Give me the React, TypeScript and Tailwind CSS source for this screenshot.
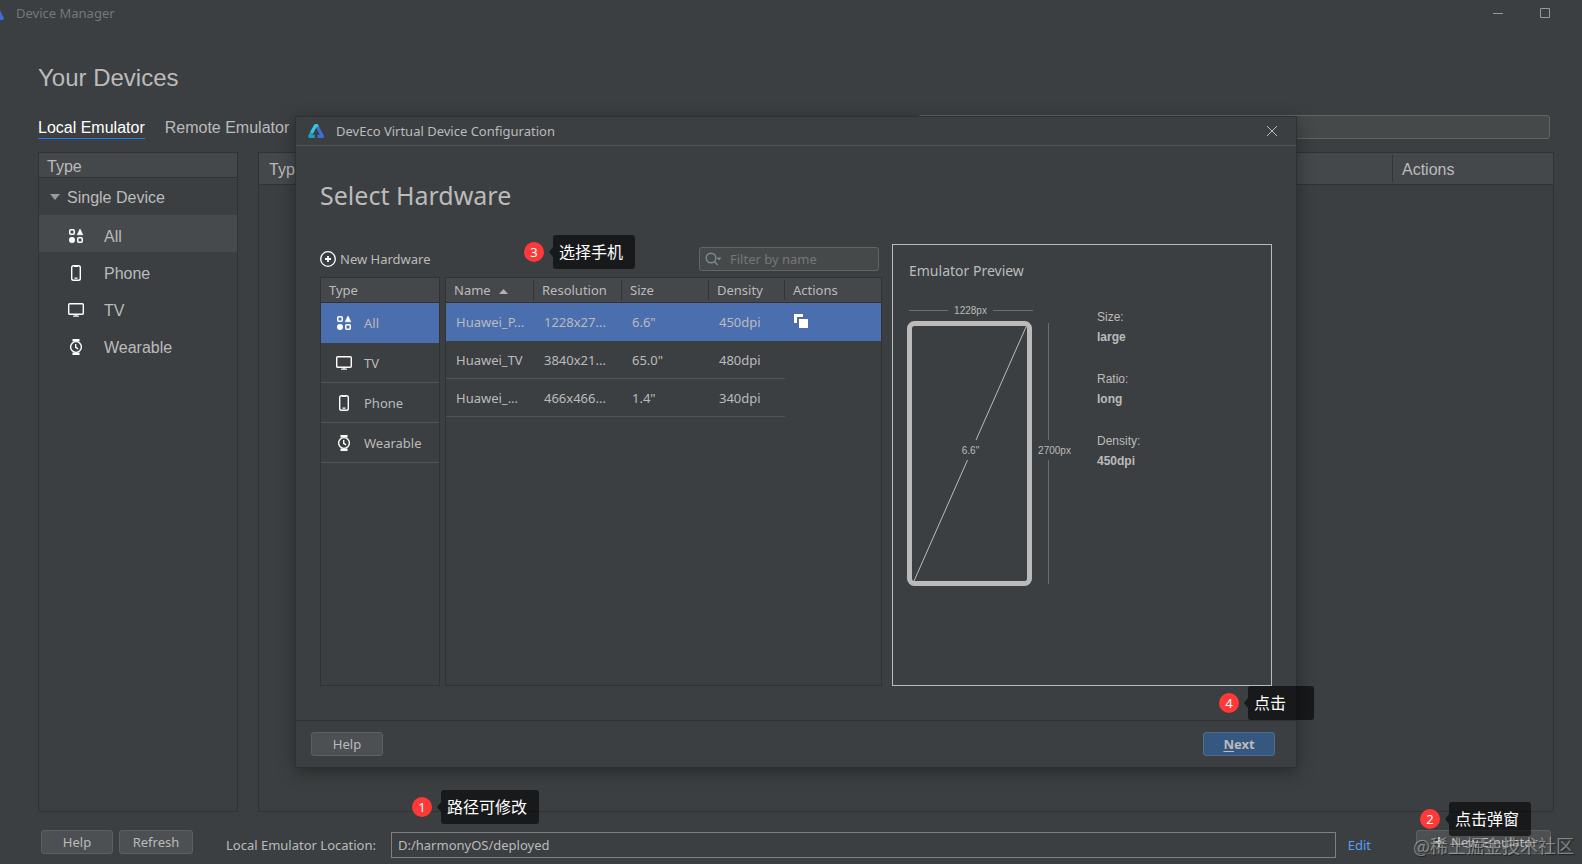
import type { ReactNode } from 'react'

type IconName = 'all' | 'phone' | 'tv' | 'watch'

const SIDEBAR_TYPES: { label: string; icon: IconName }[] = [
  { label: 'All', icon: 'all' },
  { label: 'Phone', icon: 'phone' },
  { label: 'TV', icon: 'tv' },
  { label: 'Wearable', icon: 'watch' },
]

const HARDWARE_TYPES: { label: string; icon: IconName }[] = [
  { label: 'All', icon: 'all' },
  { label: 'TV', icon: 'tv' },
  { label: 'Phone', icon: 'phone' },
  { label: 'Wearable', icon: 'watch' },
]

const HARDWARE = [
  { name: 'Huawei_P...', resolution: '1228x27...', size: '6.6"', density: '450dpi' },
  { name: 'Huawei_TV', resolution: '3840x21...', size: '65.0"', density: '480dpi' },
  { name: 'Huawei_...', resolution: '466x466...', size: '1.4"', density: '340dpi' },
]

const SPECS = [
  { label: 'Size:', value: 'large' },
  { label: 'Ratio:', value: 'long' },
  { label: 'Density:', value: '450dpi' },
]

function TypeIcon({ name }: { name: IconName }) {
  return (
    <svg width="16" height="16" viewBox="0 0 16 16" fill="none" stroke="#fff" className="shrink-0">
      {name === 'all' && (
        <>
          <rect x="1.75" y="1.75" width="4.5" height="4.5" rx="1" strokeWidth="1.5" />
          <path d="M12 1 14.8 6.8H9.2Z" fill="#fff" strokeWidth="0.6" strokeLinejoin="round" />
          <circle cx="4" cy="12" r="3" fill="#fff" stroke="none" />
          <rect x="9.75" y="9.75" width="4.5" height="4.5" rx="1" strokeWidth="1.5" />
        </>
      )}
      {name === 'phone' && (
        <>
          <rect x="3.7" y="0.7" width="8.6" height="14.6" rx="1.8" strokeWidth="1.4" />
          <path d="M6 1.5h4M6.5 13.2h3" strokeWidth="1.2" />
        </>
      )}
      {name === 'tv' && (
        <>
          <rect x="0.7" y="1.7" width="14.6" height="10.6" rx="1" strokeWidth="1.4" />
          <path d="M5 14.2h6M6.5 13.2h3" strokeWidth="1" />
        </>
      )}
      {name === 'watch' && (
        <>
          <path d="M4.5 0h7v2.5h-7zM4.5 13.5h7V16h-7z" fill="#fff" stroke="none" />
          <circle cx="8" cy="8" r="5.4" strokeWidth="1.4" />
          <path d="M7.7 5v3.3l2.4 1.6" strokeWidth="1.4" />
        </>
      )}
    </svg>
  )
}

function Logo({ className = '' }: { className?: string }) {
  return (
    <svg width="16" height="14" viewBox="0 0 16 14" fill="none" strokeLinejoin="round" className={className}>
      <path d="M8.800 1.700 14.300 12.300H9.500" stroke="#3b6fd4" strokeWidth="3.200" />
      <path d="M6.800 12.300H1.700L5.200 6" stroke="#1f9fba" strokeWidth="3.200" />
      <path d="M3.600 8.800 7.400 1.700H8.800L9.500 3" stroke="#3cc4dc" strokeWidth="3.200" />
    </svg>
  )
}

function Button({ children, primary, className = '' }: { children: ReactNode; primary?: boolean; className?: string }) {
  return (
    <button
      type="button"
      className={`h-6 rounded-[3px] border text-[13px] leading-5 ${
        primary ? 'border-[#4c708c] bg-[#365880] font-bold' : 'border-[#5e6060] bg-[#4c5052]'
      } ${className}`}
    >
      {children}
    </button>
  )
}

function Callout({ step, text, className = '', boxClass = '' }: { step: number; text: string; className?: string; boxClass?: string }) {
  return (
    <div className={`absolute flex items-center ${className}`}>
      <span className="flex size-5 items-center justify-center rounded-full bg-[#ff3838] text-[13px] leading-none text-white">
        {step}
      </span>
      <span className="ml-[5px] h-0 w-0 border-y-[5px] border-r-[4px] border-y-transparent border-r-black/60" />
      <span
        className={`h-[34px] rounded-[3px] bg-black/60 pl-1.5 font-['Noto_Sans_CJK_SC',sans-serif] text-base leading-8 whitespace-nowrap text-white ${boxClass}`}
      >
        {text}
      </span>
    </div>
  )
}

function EmulatorPreview() {
  return (
    <section className="w-[380px] self-stretch border border-[#bbb] px-4 pt-4">
      <h3 className="text-sm leading-5">Emulator Preview</h3>
      <div className="mt-[23px] flex font-['Liberation_Sans',sans-serif]">
        <svg width="168" height="284" viewBox="907 304 168 284" className="-ml-0.5 shrink-0 text-[10px]" fill="#bbb">
          <path d="M909 310.500h39M993 310.500h40M1048.500 323v117M1048.500 460v124" stroke="#6a6c6d" fill="none" />
          <rect x="909.500" y="323.500" width="120" height="260" rx="5" fill="none" stroke="#bbb" strokeWidth="5" />
          <path d="M1026 327 976 440M967.500 460 914 581" stroke="#bbb" fill="none" />
          <text x="970.500" y="314" textAnchor="middle">1228px</text>
          <text x="970.500" y="454" textAnchor="middle">6.6"</text>
          <text x="1054.500" y="454" textAnchor="middle">2700px</text>
        </svg>
        <dl className="ml-[22px] pt-[3px] text-xs leading-5">
          {SPECS.map(spec => (
            <div key={spec.label} className="mb-[22px]">
              <dt>{spec.label}</dt>
              <dd className="font-bold">{spec.value}</dd>
            </div>
          ))}
        </dl>
      </div>
    </section>
  )
}

function HardwareTable() {
  const head = 'relative h-[25px] pl-2 pt-0.5 text-left font-normal border-b border-[#323232]'
  const divider = <span className="absolute top-0.5 right-0 bottom-0.5 w-px bg-[#323435]" />
  return (
    <table className="w-full table-fixed border-separate border-spacing-0">
      <thead className="bg-[#45484a]">
        <tr>
          <th className={`${head} w-[88px]`}>
            <span className="flex items-center gap-2">
              Name
              <svg width="9" height="5" viewBox="0 0 9 5" fill="#afb1b3"><path d="M4.500 0 9 5H0Z" /></svg>
            </span>
            {divider}
          </th>
          <th className={`${head} w-[88px]`}>Resolution{divider}</th>
          <th className={`${head} w-[87px]`}>Size{divider}</th>
          <th className={`${head} w-[76px]`}>Density{divider}</th>
          <th className={head}>Actions</th>
        </tr>
      </thead>
      <tbody>
        {HARDWARE.map((hw, i) => {
          const cell = `h-[38px] border-b pt-0.5 pl-2.5 whitespace-nowrap ${i === 0 ? 'border-[#4b6eaf]' : 'border-[#515355]'}`
          return (
            <tr key={hw.name} className={i === 0 ? 'bg-[#4b6eaf]' : ''}>
              <td className={cell}>{hw.name}</td>
              <td className={cell}>{hw.resolution}</td>
              <td className={cell}>{hw.size}</td>
              <td className={cell}>{hw.density}</td>
              <td className="pb-0.5 pl-2">
                {i === 0 && (
                  <button type="button" aria-label="Clone device" className="block">
                    <svg width="16" height="16" viewBox="0 0 16 16" fill="#fff">
                      <path d="M1 1h9v3H4v6H1zM6 6h9v9H6z" />
                    </svg>
                  </button>
                )}
              </td>
            </tr>
          )
        })}
      </tbody>
    </table>
  )
}

function ConfigDialog() {
  return (
    <div
      role="dialog"
      aria-label="DevEco Virtual Device Configuration"
      className="relative flex h-[652px] w-[1002px] flex-col border border-[#2e3031] bg-[#3c3f41] shadow-[0_4px_16px_rgba(0,0,0,0.35)]"
    >
      <header className="flex h-[29px] items-center border-b border-[#515355] pr-[18px] pl-3">
        <Logo />
        <span className="ml-3 flex-1 pt-0.5">DevEco Virtual Device Configuration</span>
        <button type="button" aria-label="Close">
          <svg width="12" height="12" viewBox="0 0 12 12" stroke="#bbb" fill="none"><path d="m1 1 10 10M11 1 1 11" /></svg>
        </button>
      </header>

      <div className="flex flex-1 gap-2.5 pt-[33px] pr-6 pb-[34px] pl-6">
        <div className="flex min-w-0 flex-1 flex-col">
          <h2 className="text-[25px] leading-8">Select Hardware</h2>
          <div className="mt-9 flex h-6 items-center justify-between pr-[3px]">
            <button type="button" className="flex items-center gap-1">
              <svg width="16" height="16" viewBox="0 0 16 16" fill="none" stroke="#fff">
                <circle cx="8" cy="8" r="7.300" strokeWidth="1.300" />
                <path d="M8 5v6M5 8h6" strokeWidth="1.800" />
              </svg>
              <span className="pt-0.5">New Hardware</span>
            </button>
            <label className="flex h-6 w-[180px] items-center rounded-[3px] border border-[#646464] bg-[#45494a] pl-[5px]">
              <svg width="17" height="14" viewBox="0 0 17 14" fill="none" stroke="#7f8b91" strokeWidth="1.400" className="shrink-0">
                <circle cx="6" cy="6" r="4.800" />
                <path d="m9.300 9.300 3.400 3.700" />
                <path d="M11.500 5.500h5L14 8.500Z" fill="#7f8b91" stroke="none" />
              </svg>
              <input
                aria-label="Filter by name"
                placeholder="Filter by name"
                className="ml-2 w-full min-w-0 bg-transparent pt-0.5 outline-none placeholder:text-[#777]"
              />
            </label>
          </div>
          <div className="mt-1.5 flex flex-1 gap-[5px]">
            <div className="w-[120px] border border-[#323232]">
              <div className="h-[25px] border-b border-[#323232] bg-[#45484a] pl-2 leading-[25px]">Type</div>
              {HARDWARE_TYPES.map((type, i) => (
                <button
                  key={type.label}
                  type="button"
                  className={`flex h-10 w-full items-center gap-3 border-b pl-[15px] ${
                    i === 0 ? 'border-[#4b6eaf] bg-[#4b6eaf]' : 'border-[#515355]'
                  }`}
                >
                  <TypeIcon name={type.icon} />
                  <span className="pt-0.5">{type.label}</span>
                </button>
              ))}
            </div>
            <div className="min-w-0 flex-1 border border-[#323232]">
              <HardwareTable />
            </div>
          </div>
        </div>
        <div className="flex pt-[65px]">
          <EmulatorPreview />
        </div>
      </div>

      <footer className="flex h-[47px] items-start justify-between border-t border-[#323232] pt-[11px] pr-[21px] pl-[15px]">
        <Button className="w-[72px]">Help</Button>
        <Button primary className="w-[72px]"><u className="underline-offset-2">N</u>ext</Button>
      </footer>

      <Callout step={3} text="选择手机" className="top-[118px] left-[228px]" boxClass="w-[82px]" />
      <Callout step={4} text="点击" className="-right-[18px] bottom-[47px]" boxClass="w-[66px]" />
    </div>
  )
}

export default function App() {
  return (
    <div className="relative flex min-h-screen flex-col overflow-hidden bg-[#3c3f41] font-['Noto_Sans','Noto_Sans_CJK_SC',sans-serif] text-[13px] text-[#bbb]">
      <header className="flex h-[25px] items-center pr-[31px] text-[#777]">
        <Logo className="-ml-3 shrink-0" />
        <span className="ml-3 flex-1 pt-0.5">Device Manager</span>
        <button type="button" aria-label="Minimize" className="mr-[35px]">
          <svg width="12" height="12" viewBox="0 0 12 12" stroke="#999"><path d="M1 6.500h10" /></svg>
        </button>
        <button type="button" aria-label="Maximize">
          <svg width="12" height="12" viewBox="0 0 12 12" fill="none" stroke="#999"><path d="M1.500 1.500h9v9h-9z" /></svg>
        </button>
      </header>

      <main className="flex flex-1 flex-col pr-7 pl-[38px] font-['Liberation_Sans',sans-serif] text-base">
        <h1 className="mt-[37px] text-2xl leading-8">Your Devices</h1>
        <div className="mt-[21px] flex h-6 items-end justify-between pr-1">
          <div className="flex gap-5 leading-5">
            <button type="button" className="border-b border-[#1a7cf0] pt-0.5 text-white">Local Emulator</button>
            <button type="button" className="border-b border-transparent pt-0.5">Remote Emulator</button>
          </div>
          <input aria-label="Search devices" className="h-6 w-[632px] rounded-[3px] border border-[#646464] bg-[#45494a] px-2" />
        </div>

        <div className="mt-[13px] flex flex-1 gap-5">
          <aside className="w-[200px] border border-[#323232]">
            <div className="h-[25px] border-b border-[#323232] bg-[#45484a] pl-2 leading-7">Type</div>
            <div className="flex h-[37px] items-center gap-[7px] pl-[11px]">
              <svg width="10" height="6" viewBox="0 0 10 6" fill="#999"><path d="M0 0h10L5 6Z" /></svg>
              <span className="pt-0.5">Single Device</span>
            </div>
            {SIDEBAR_TYPES.map((type, i) => (
              <button
                key={type.label}
                type="button"
                className={`flex h-[37px] w-full items-center gap-5 pt-1 pl-[29px] ${i === 0 ? 'bg-[#464a4d]' : ''}`}
              >
                <TypeIcon name={type.icon} />
                <span className="pt-[3px]">{type.label}</span>
              </button>
            ))}
          </aside>
          <div className="min-w-0 flex-1 border border-[#323232]">
            <table className="w-full table-fixed border-separate border-spacing-0">
              <thead className="bg-[#45484a]">
                <tr>
                  <th className="h-8 border-b border-[#323232] pt-0.5 pl-2.5 text-left font-normal">Type</th>
                  <th className="relative w-[161px] border-b border-[#323232] pt-0.5 pl-2.5 text-left font-normal">
                    <span className="absolute top-0.5 bottom-0.5 left-0 w-px bg-[#323435]" />
                    Actions
                  </th>
                </tr>
              </thead>
            </table>
          </div>
        </div>
      </main>

      <footer className="relative flex h-[52px] items-start pt-[18px] pr-[31px] pl-[41px]">
        <Button className="w-[72px]">Help</Button>
        <Button className="ml-1.5 w-[74px]">Refresh</Button>
        <div className="flex flex-1 items-center pt-0.5 pl-[33px]">
          <label htmlFor="location" className="pt-0.5">Local Emulator Location:</label>
          <input
            id="location"
            defaultValue="D:/harmonyOS/deployed"
            className="ml-[15px] h-[26px] min-w-0 flex-1 border border-[#808080] bg-transparent px-1.5 outline-none"
          />
          <a href="#edit" className="mr-[45px] ml-3 pt-0.5 text-[#589df6]">Edit</a>
        </div>
        <Button className="flex w-[135px] items-center gap-1.5 pl-4">
          <svg width="12" height="12" viewBox="0 0 12 12" stroke="#bbb" strokeWidth="2"><path d="M6 1v10M1 6h10" /></svg>
          New Emulator
        </Button>
        <Callout step={1} text="路径可修改" className="-top-[22px] left-[412px]" boxClass="w-[98px]" />
        <Callout step={2} text="点击弹窗" className="-top-[10px] right-[51px]" boxClass="w-[82px]" />
        <span className="absolute right-2 bottom-[7px] font-['Noto_Sans_CJK_SC',sans-serif] text-lg leading-6 text-white/40 [text-shadow:1px_1px_1px_rgba(0,0,0,0.5)]">
          @稀土掘金技术社区
        </span>
      </footer>

      <div className="pointer-events-none absolute inset-0 flex items-start justify-center pt-[116px] pl-[10px]">
        <ConfigDialog />
      </div>
    </div>
  )
}
